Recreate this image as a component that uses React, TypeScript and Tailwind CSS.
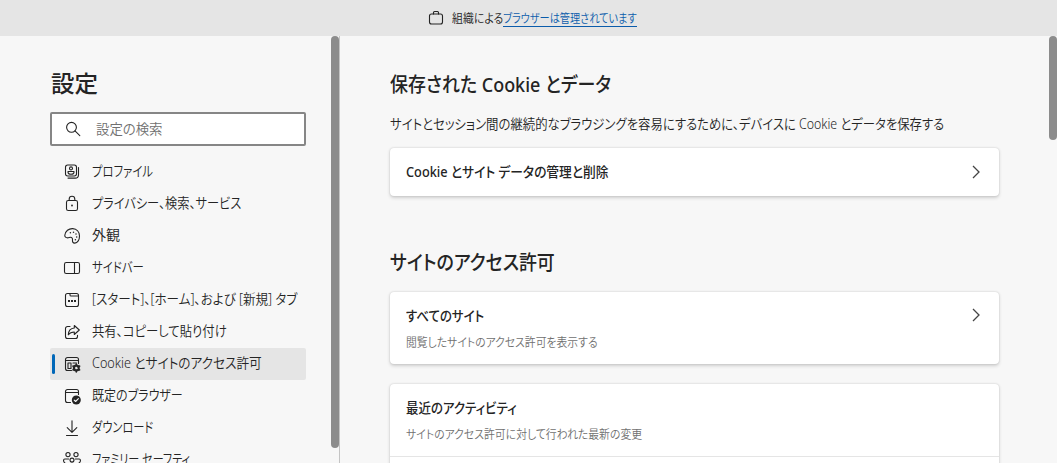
import { useLayoutEffect, useRef, useState } from "react";
import type { ReactNode } from "react";

/** Single line of text, condensed horizontally to the given advance width. */
function Line({ text, width, className = "" }: { text: string; width: number; className?: string }) {
  const ref = useRef<HTMLSpanElement>(null);
  const [scale, setScale] = useState(1);
  useLayoutEffect(() => {
    if (ref.current) setScale(width / ref.current.offsetWidth);
  }, [width, text]);
  return (
    <span className={`block shrink-0 ${className}`} style={{ width }}>
      <span
        ref={ref}
        className="inline-block origin-left whitespace-nowrap [font-feature-settings:'palt']"
        style={{ transform: `scaleX(${scale})` }}
      >
        {text}
      </span>
    </span>
  );
}

function Icon({ children, className = "size-4" }: { children: ReactNode; className?: string }) {
  return (
    <svg viewBox="0 0 16 16" className={`shrink-0 overflow-visible ${className}`} fill="none" stroke="#242424" strokeWidth="1.1" strokeLinecap="round" strokeLinejoin="round">
      {children}
    </svg>
  );
}

const profile = (
  <Icon>
    <rect x="1.5" y="1" width="11" height="11" rx="2.2" />
    <circle cx="7" cy="4.4" r="1.5" />
    <path d="M4 7.5h6v.8c0 1.3-1.3 2-3 2s-3-.7-3-2zM14.5 3.5v7.2a3.4 3.4 0 0 1-3.4 3.4H4" />
  </Icon>
);
const lock = (
  <Icon>
    <rect x="2.5" y="4.5" width="11" height="10" rx="1.8" />
    <path d="M5.2 4.5V3a2.8 2.8 0 0 1 5.6 0v1.5" />
    <circle cx="8" cy="9.5" r=".9" fill="#242424" stroke="none" />
  </Icon>
);
const palette = (
  <Icon>
    <path d="M.8 7.3C1.3 3 4.8.4 8.7.6c4 .3 6.8 3.3 6.8 7.3 0 3.7-1.8 7.2-4.7 7.2-2.1 0-2.5-1.5-2.3-3.2.2-1.6-.6-2.6-2-2.6-1 0-1.700.6-2.800.6C1.900 9.900.6 8.900.8 7.300z" />
    <g fill="#242424" stroke="none">
      <circle cx="6.400" cy="4.800" r=".75" />
      <circle cx="9.500" cy="4.200" r=".75" />
      <circle cx="12" cy="6.100" r=".75" />
      <circle cx="12.700" cy="9" r=".75" />
      <circle cx="11.400" cy="11.700" r=".75" />
    </g>
  </Icon>
);
const sidebar = (
  <Icon>
    <rect x=".5" y="2.500" width="15" height="11" rx="1.800" />
    <path d="M10.500 2.500v11" />
  </Icon>
);
const start = (
  <Icon>
    <rect x="1.500" y="1.500" width="13" height="13" rx="2" />
    <path d="M6 1.500v1.400c0 .7.400 1.100 1.100 1.100h7.400" />
    <g fill="#242424" stroke="none">
      <rect x="4" y="8" width="2" height="2" />
      <rect x="7" y="8" width="2" height="2" />
      <rect x="10" y="8" width="2" height="2" />
    </g>
  </Icon>
);
const share = (
  <Icon>
    <path d="M6 2.500H3.500a2 2 0 0 0-2 2v8a2 2 0 0 0 2 2h8a2 2 0 0 0 2-2v-1.300" />
    <path d="M10.300 1.500l5 4.500-5 4.500V8C7.500 8 5.800 8.700 4.300 10.800 4.500 6.700 6.600 4.300 10.300 4z" />
  </Icon>
);
const cookies = (
  <Icon>
    <path d="M7.500 14.500h-4a2 2 0 0 1-2-2v-9a2 2 0 0 1 2-2h9a2 2 0 0 1 2 2v4M1.500 4.500h13M9 7h3.500M7 12.500H4V7h3v5.500" />
    <circle cx="12.300" cy="12" r="2.500" stroke="#242424" strokeWidth="2" />
    <path d="M12.300 8.200v7.600M9 10.100l6.600 3.800M9 13.900l6.600-3.800" strokeWidth="1.700" />
    <circle cx="12.300" cy="12" r="1.200" fill="#e5e5e5" stroke="none" />
  </Icon>
);
const browser = (
  <Icon>
    <path d="M6.500 14.500h-3a2 2 0 0 1-2-2v-9a2 2 0 0 1 2-2h9a2 2 0 0 1 2 2v3M1.500 4.500h13" />
    <circle cx="12.300" cy="12" r="4.500" fill="#242424" stroke="none" />
    <path d="M10.200 12.200l1.400 1.300 2.800-2.900" stroke="#f7f7f7" />
  </Icon>
);
const download = (
  <Icon>
    <path d="M8 .8v11.400M3.200 7.700L8 12.300l4.800-4.600M2.500 15.500h11" />
  </Icon>
);
const family = (
  <Icon>
    <circle cx="4" cy="2.600" r="2.100" />
    <circle cx="12" cy="2.600" r="2.100" />
    <circle cx="8" cy="8.100" r="2" />
    <path d="M4.600 7H.8C-.8 7-.8 9.500.5 10.700c.8.800 1.800 1.100 3 1.100M11.400 7h3.800c1.600 0 1.600 2.500.3 3.700-.8.800-1.800 1.100-3 1.100M4.500 15c0-3 1-3.300 2-3.300h3c1 0 2 .3 2 3.300" />
  </Icon>
);

const items = [
  { label: "プロファイル", width: 61, icon: profile },
  { label: "プライバシー、検索、サービス", width: 149, icon: lock },
  { label: "外観", width: 28, icon: palette },
  { label: "サイドバー", width: 52, icon: sidebar },
  { label: "[スタート]、[ホーム]、および [新規] タブ", width: 205, icon: start },
  { label: "共有、コピーして貼り付け", width: 135, icon: share },
  { label: "Cookie とサイトのアクセス許可", width: 170, icon: cookies, active: true },
  { label: "既定のブラウザー", width: 91, icon: browser },
  { label: "ダウンロード", width: 61, icon: download },
  { label: "ファミリー セーフティ", width: 98, icon: family },
];

function Chevron() {
  return (
    <svg viewBox="0 0 8 14" className="mr-[19px] h-[14px] w-2 shrink-0" fill="none" stroke="#444" strokeWidth="1.300">
      <path d="M1 1l6 6-6 6" />
    </svg>
  );
}

const card = "rounded bg-white shadow-[0_1.600px_3.600px_rgba(0,0,0,0.16),0_0_2px_rgba(0,0,0,0.14)]";

export default function App() {
  return (
    <div className="flex h-[463px] w-[1057px] flex-col overflow-hidden bg-[#f7f7f7] font-['Noto_Sans','Noto_Sans_CJK_JP',sans-serif] text-[#242424]" lang="ja">
      <header className="flex h-9 shrink-0 items-center bg-[#e5e5e5] pl-[428px] text-xs font-[350]">
        <Icon className="size-4">
          <rect x="1.500" y="4" width="13" height="10" rx="2" />
          <path d="M5.500 4V2.500a1 1 0 0 1 1-1h3a1 1 0 0 1 1 1V4" />
        </Icon>
        <Line text="組織による" width={51} className="mt-0.5 ml-2" />
        <a className="mt-0.5 block border-b border-[#0b5cab] leading-[15px] text-[#0b5cab]">
          <Line text="ブラウザーは管理されています" width={134} />
        </a>
      </header>

      <div className="flex min-h-0 flex-1">
        <aside className="flex w-[340px] shrink-0 justify-between border-r border-[#c4c4c4] pl-[50px]">
          <div className="w-64">
            <h1 className="mt-[31px] h-8 pl-px text-[23px] leading-8 font-medium">
              <Line text="設定" width={47} />
            </h1>
            <div className="mt-[13px] flex h-[34px] items-center rounded-[2px] border-2 border-[#868686] bg-white pl-[13px] text-sm leading-5 text-[#707070]">
              <Icon>
                <circle cx="6.500" cy="6.300" r="4.900" />
                <path d="M10 9.900l4.800 4.700" />
              </Icon>
              <Line text="設定の検索" width={67} className="ml-[15px] font-[350]" />
            </div>
            <nav className="mt-[10px]">
              {items.map((item) => (
                <div key={item.label} className={`flex h-8 items-center rounded-[2px] pl-0.5 text-sm leading-5 ${item.active ? "bg-[#e5e5e5]" : ""}`}>
                  <span className={`h-5 w-[3px] rounded-full ${item.active ? "bg-[#0067b8]" : ""}`} />
                  <span className="ml-[9px] flex">{item.icon}</span>
                  <Line text={item.label} width={item.width} className="-mt-px mb-px ml-3 font-[350]" />
                </div>
              ))}
            </nav>
          </div>
          <div className="h-[412px] w-2 rounded-full bg-[#8c8c8c]" />
        </aside>

        <main className="flex min-w-0 flex-1 justify-between pl-[50px]">
          <div className="w-[609px]">
            <h2 className="mt-[35px] h-7 text-xl leading-7 font-medium">
              <Line text="保存された Cookie とデータ" width={221} />
            </h2>
            <p className="mt-[15px] h-5 text-sm leading-5 font-[350]">
              <Line text="サイトとセッション間の継続的なブラウジングを容易にするために、デバイスに Cookie とデータを保存する" width={554} />
            </p>
            <section className={`mt-[14px] flex h-12 items-center justify-between pl-4 text-sm leading-5 font-medium ${card}`}>
              <Line text="Cookie とサイト データの管理と削除" width={203} />
              <Chevron />
            </section>

            <h2 className="mt-[53px] h-7 text-xl leading-7 font-medium">
              <Line text="サイトのアクセス許可" width={165} />
            </h2>
            <section className={`mt-[15px] flex h-[72px] flex-col pt-[13px] pl-4 ${card}`}>
              <div className="flex items-center justify-between text-sm leading-5 font-medium">
                <Line text="すべてのサイト" width={78} className="mt-px -mb-px" />
                <Chevron />
              </div>
              <Line text="閲覧したサイトのアクセス許可を表示する" width={192} className="mt-[10px] text-xs leading-4 font-[350] text-[#707070]" />
            </section>
            <section className={`mt-5 h-[140px] ${card}`}>
              <div className="h-[73px] border-b border-[#e5e5e5] pt-[14px] pl-4">
                <Line text="最近のアクティビティ" width={111} className="text-sm leading-5 font-medium" />
                <Line text="サイトのアクセス許可に対して行われた最新の変更" width={236} className="mt-[9px] text-xs leading-4 font-[350] text-[#707070]" />
              </div>
            </section>
          </div>
          <div className="h-[104px] w-2 rounded-full bg-[#8c8c8c]" />
        </main>
      </div>
    </div>
  );
}
